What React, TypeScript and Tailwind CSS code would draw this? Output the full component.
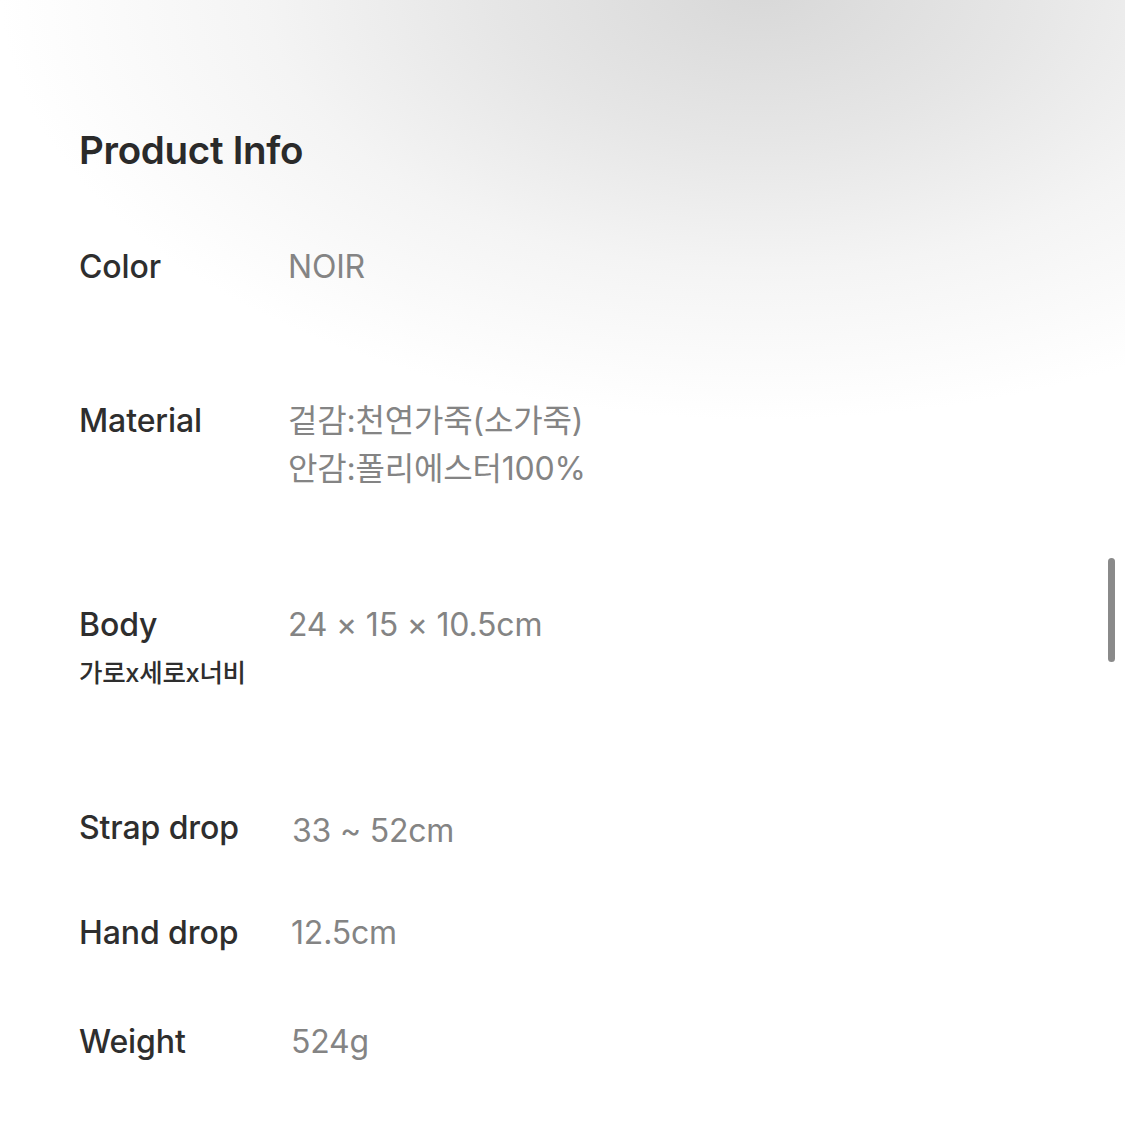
import React from "react";

const font = { fontFamily: '"Inter", "Noto Sans CJK KR", sans-serif' };

function Row({ label, sub, values, valueClass = "" }: { label: string; sub?: string; values: string[]; valueClass?: string }) {
  return (
    <div className="flex items-start">
      <div className="w-[209px] shrink-0">
        <div className="text-[32px] leading-[48px] font-medium text-[#2e2e2e] tracking-[-0.1px]">{label}</div>
        {sub && <div className="mt-[8px] text-[25.5px] leading-[32px] font-medium text-[#2e2e2e] tracking-[-0.3px]">{sub}</div>}
      </div>
      <div className={"text-[32px] leading-[48px] font-normal text-[#848484] tracking-[-0.2px] " + valueClass}>
        {values.map((v) => (
          <div key={v}>{v}</div>
        ))}
      </div>
    </div>
  );
}

export default function App() {
  return (
    <div
      style={font}
      className="relative w-[1125px] h-[1142px] overflow-hidden bg-white bg-[radial-gradient(ellipse_760px_430px_at_760px_-10px,#d8d8d8_0%,#e6e6e6_35%,#f4f4f4_65%,#ffffff_100%)]"
    >
      <div className="pl-[79px] pt-[127px] flex flex-col">
        <h1 className="text-[38.5px] leading-[46px] font-semibold text-[#2a2a2a] tracking-[-0.3px]">Product Info</h1>
        <div className="mt-[70px]">
          <Row label="Color" values={["NOIR"]} />
        </div>
        <div className="mt-[106px]">
          <Row label="Material" values={["겉감:천연가죽(소가죽)", "안감:폴리에스터100%"]} />
        </div>
        <div className="mt-[108px]">
          <Row label="Body" sub="가로x세로x너비" values={["24 × 15 × 10.5cm"]} />
        </div>
        <div className="mt-[115px]">
          <Row label="Strap drop" values={["33 ~ 52cm"]} valueClass="ml-[4px] mt-[3px]" />
        </div>
        <div className="mt-[54px]">
          <Row label="Hand drop" values={["12.5cm"]} valueClass="ml-[3px]" />
        </div>
        <div className="mt-[61px]">
          <Row label="Weight" values={["524g"]} valueClass="ml-[3px]" />
        </div>
      </div>
      <div className="absolute left-[1108px] top-[558px] w-[7px] h-[104px] rounded-full bg-[#8a8a8a]" />
    </div>
  );
}
